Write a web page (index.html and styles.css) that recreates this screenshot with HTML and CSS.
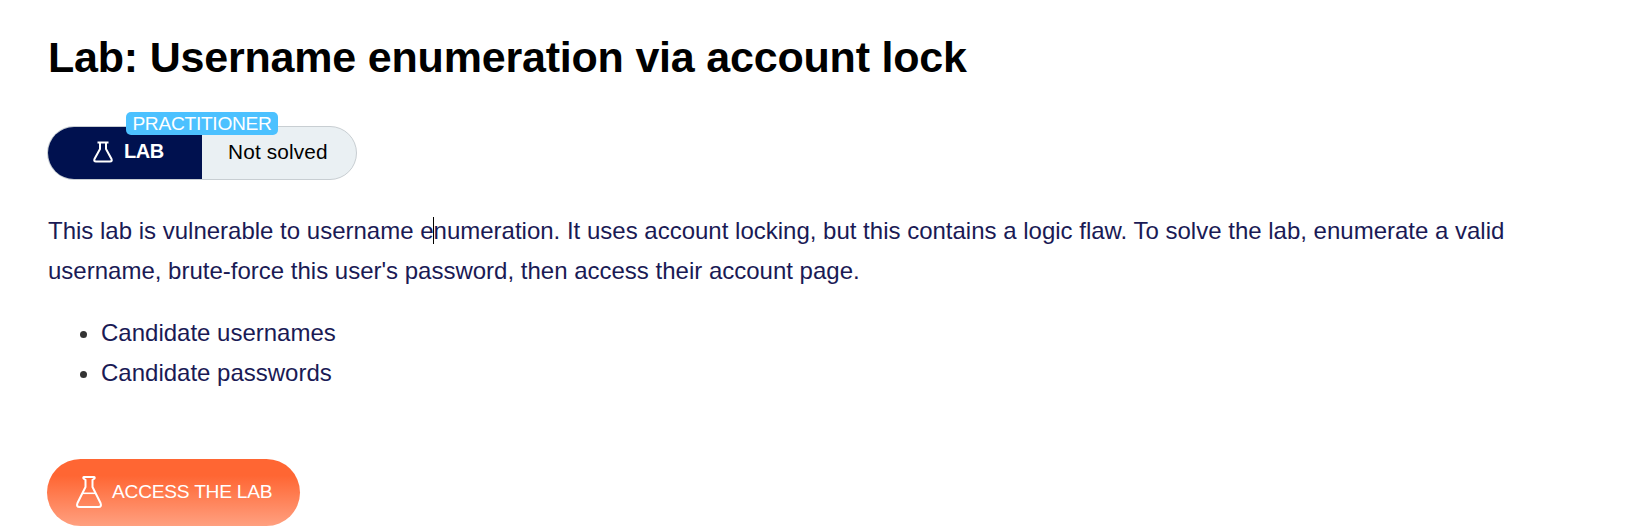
FILE: index.html
```html
<!DOCTYPE html>
<html lang="en">
<head>
<meta charset="utf-8">
<title>Lab: Username enumeration via account lock</title>
<link rel="stylesheet" href="styles.css">
</head>
<body>
<main class="page">
  <h1 class="title">Lab: Username enumeration via account lock</h1>
  <div class="status">
    <div class="status-lab">
      <svg class="flask-small" viewBox="0 0 20 22"><path d="M4.500 1.500H15.500M7 2V8L1.500 18Q.6 20.500 3 20.500H17Q19.400 20.500 18.500 18L13 8V2"/></svg>
      <span>LAB</span>
    </div>
    <div class="status-state">Not solved</div>
    <span class="level">PRACTITIONER</span>
  </div>
  <p class="text">This lab is vulnerable to username e<span class="caret"></span>numeration. It uses account locking, but this contains a logic flaw. To solve the lab, enumerate a valid<br>username, brute-force this user's password, then access their account page.</p>
  <ul class="links">
    <li><a class="link">Candidate usernames</a></li>
    <li><a class="link">Candidate passwords</a></li>
  </ul>
  <a class="access">
    <svg class="flask-large" viewBox="0 0 26 32"><path d="M8 1H18Q19 1 18.500 2.500L16.500 4V11L24.500 27Q26 31 22.500 31H3.500Q0 31 1.500 27L9.500 11V4L7.500 2.500Q7 1 8 1Z"/><path class="liquid" d="M6.500 17.300H19.500"/></svg>
    <span>ACCESS THE LAB</span>
  </a>
</main>
</body>
</html>
```
FILE: styles.css
```css
body { margin: 0; background: #fff; font-family: "Liberation Sans", Arial, sans-serif; }
.page { padding: 32px 48px 0; }
.title { margin: 0; font-size: 43px; line-height: 50px; letter-spacing: -0.2px; color: #000; white-space: nowrap; }
.status { position: relative; display: flex; box-sizing: border-box; width: 310px; height: 54px; margin: 44px 0 0 -1px; border: 1px solid #c8ced2; border-radius: 27px; background: #eaf0f3; }
.status-lab, .status-state { display: flex; align-items: center; box-sizing: border-box; width: 154px; padding-bottom: 3px; }
.status-lab { gap: 11px; padding-left: 45px; border-radius: 26px 0 0 26px; background: #00114f; color: #fff; font-size: 20px; font-weight: bold; letter-spacing: -0.5px; }
.status-state { padding-left: 26px; font-size: 20.8px; letter-spacing: 0.15px; white-space: nowrap; }
.level { position: absolute; left: 78px; top: -15px; width: 152px; height: 23px; border-radius: 5px; background: #4cc1ff; color: #fff; font-size: 19.2px; letter-spacing: -0.3px; line-height: 23px; text-align: center; }
.flask-small { width: 20px; height: 22px; fill: none; stroke: #fff; stroke-width: 2; }
.text { margin: 31px 0 0; font-size: 24px; line-height: 40px; color: #1a1a55; white-space: nowrap; }
.caret { display: inline-block; width: 1px; height: 27px; margin: 0 0 0 -1px; background: #000; vertical-align: -5px; }
.links { margin: 22px 0 0; padding-left: 53px; font-size: 24px; line-height: 40px; color: #333; }
.link { color: #1a1a55; }
.access { display: flex; align-items: center; box-sizing: border-box; gap: 10px; width: 253px; height: 67px; margin: 66px 0 0 -1px; padding-left: 29px; border-radius: 34px; background: linear-gradient(#ff6633 25%, #ffa080); color: #fff; font-size: 19.2px; letter-spacing: -0.25px; white-space: nowrap; }
.access span { padding-bottom: 1px; }
.flask-large { width: 26px; height: 32px; fill: none; stroke: #fff; stroke-width: 2; margin-bottom: 1px; }
.liquid { stroke-width: 1.6; }
```
